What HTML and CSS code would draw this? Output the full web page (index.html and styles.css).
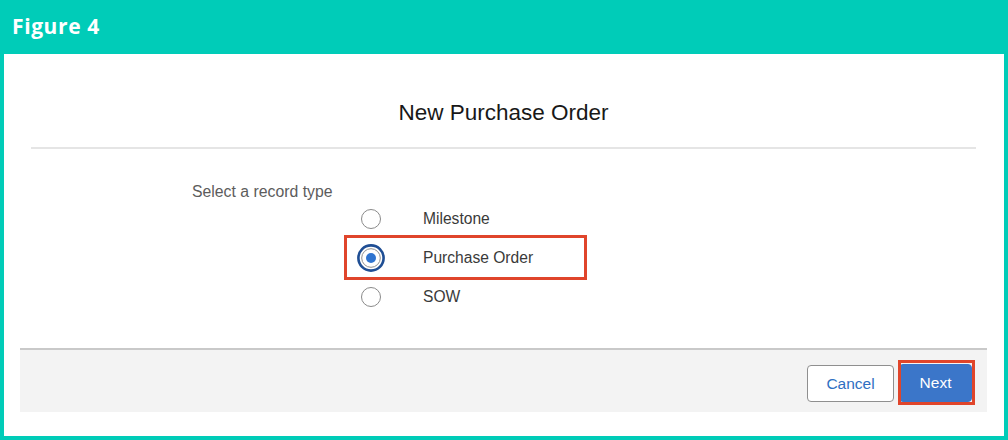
FILE: index.html
```html
<!DOCTYPE html>
<html lang="en">
<head>
<meta charset="utf-8">
<title>Figure 4</title>
<link rel="stylesheet" href="styles.css">
</head>
<body>
<div class="frame">
  <div class="figbar">Figure 4</div>
  <div class="panel">
    <div class="modal-header"><h2 class="title">New Purchase Order</h2></div>
    <div class="modal-body">
      <div class="field-label">Select a record type</div>
      <div class="options">
        <div class="row">
          <svg class="radio" width="28" height="28" viewBox="0 0 28 28"><circle cx="14" cy="14" r="9.5" fill="#fff" stroke="#8a8a8a" stroke-width="1"/></svg>
          <span class="opt-text">Milestone</span>
        </div>
        <div class="row marked">
          <svg class="radio" width="28" height="28" viewBox="0 0 28 28"><circle cx="14" cy="14" r="12.6" fill="#fff" stroke="#1f4e94" stroke-width="2.6"/><circle cx="14" cy="14" r="9.3" fill="#fff" stroke="#8f8f8f" stroke-width="1"/><circle cx="14" cy="14" r="5" fill="#2f74d0"/></svg>
          <span class="opt-text">Purchase Order</span>
        </div>
        <div class="row">
          <svg class="radio" width="28" height="28" viewBox="0 0 28 28"><circle cx="14" cy="14" r="9.5" fill="#fff" stroke="#8a8a8a" stroke-width="1"/></svg>
          <span class="opt-text">SOW</span>
        </div>
      </div>
    </div>
    <div class="modal-footer">
      <button class="btn btn-neutral">Cancel</button>
      <button class="btn btn-brand marked-btn">Next</button>
    </div>
  </div>
</div>
</body>
</html>
```
FILE: styles.css
```css
html, body {
  margin: 0;
  padding: 0;
}
body {
  background: #00ccb8;
  font-family: "Liberation Sans", Arial, sans-serif;
}
.frame {
  width: 1008px;
  height: 440px;
  background: #00ccb8;
  display: flex;
  flex-direction: column;
}
.figbar {
  height: 54px;
  box-sizing: border-box;
  padding: 0 0 3px 12px;
  display: flex;
  align-items: center;
  color: #ffffff;
  font-family: "Open Sans", "Noto Sans", sans-serif;
  font-weight: 700;
  font-size: 21px;
  letter-spacing: 0.6px;
}
.panel {
  flex: 1;
  margin: 0 4px 4px 4px;
  background: #ffffff;
  display: flex;
  flex-direction: column;
}
.modal-header {
  margin: 0 28px 0 27px;
  padding: 47px 0 22px;
  border-bottom: 2px solid #e5e5e5;
  display: flex;
  justify-content: center;
}
.title {
  margin: 0;
  font-weight: 400;
  font-size: 22.5px;
  line-height: 24px;
  color: #181818;
}
.modal-body {
  padding: 34px 0 0 188px;
  flex: 1;
}
.field-label {
  font-size: 15.8px;
  line-height: 18px;
  color: #5c5c5c;
}
.options {
  margin: -2px 0 0 152px;
  width: 243px;
}
.row {
  position: relative;
  height: 39px;
  display: flex;
  align-items: center;
  padding-left: 13px;
}
.radio {
  display: block;
  flex: none;
}
.opt-text {
  margin-left: 38px;
  font-size: 15.6px;
  color: #3a3a3a;
}
.row.marked::after {
  content: "";
  position: absolute;
  left: 0;
  right: 0;
  top: -3px;
  bottom: -3px;
  border: 3px solid #e0452b;
  pointer-events: none;
}
.modal-footer {
  margin: 0 17px 24px 16px;
  height: 64px;
  box-sizing: border-box;
  border-top: 2px solid #c9c9c9;
  background: #f3f3f3;
  display: flex;
  justify-content: flex-end;
  align-items: flex-start;
  padding: 15px 15px 0 0;
  gap: 5px;
}
.btn {
  font-family: "Liberation Sans", Arial, sans-serif;
  font-size: 15.5px;
  border-radius: 4px;
  margin: 0;
  cursor: pointer;
}
.btn-neutral {
  width: 87px;
  height: 37px;
  background: #ffffff;
  border: 1px solid #8f8f8f;
  color: #2f6fc2;
}
.btn-brand {
  width: 73px;
  height: 38px;
  margin-top: -1px;
  background: #3b76c9;
  border: 1px solid #3b76c9;
  color: #ffffff;
  position: relative;
}
.marked-btn::after {
  content: "";
  position: absolute;
  left: -2px;
  right: -4px;
  top: -5px;
  bottom: -4px;
  border: 3px solid #e0452b;
  pointer-events: none;
}
```
